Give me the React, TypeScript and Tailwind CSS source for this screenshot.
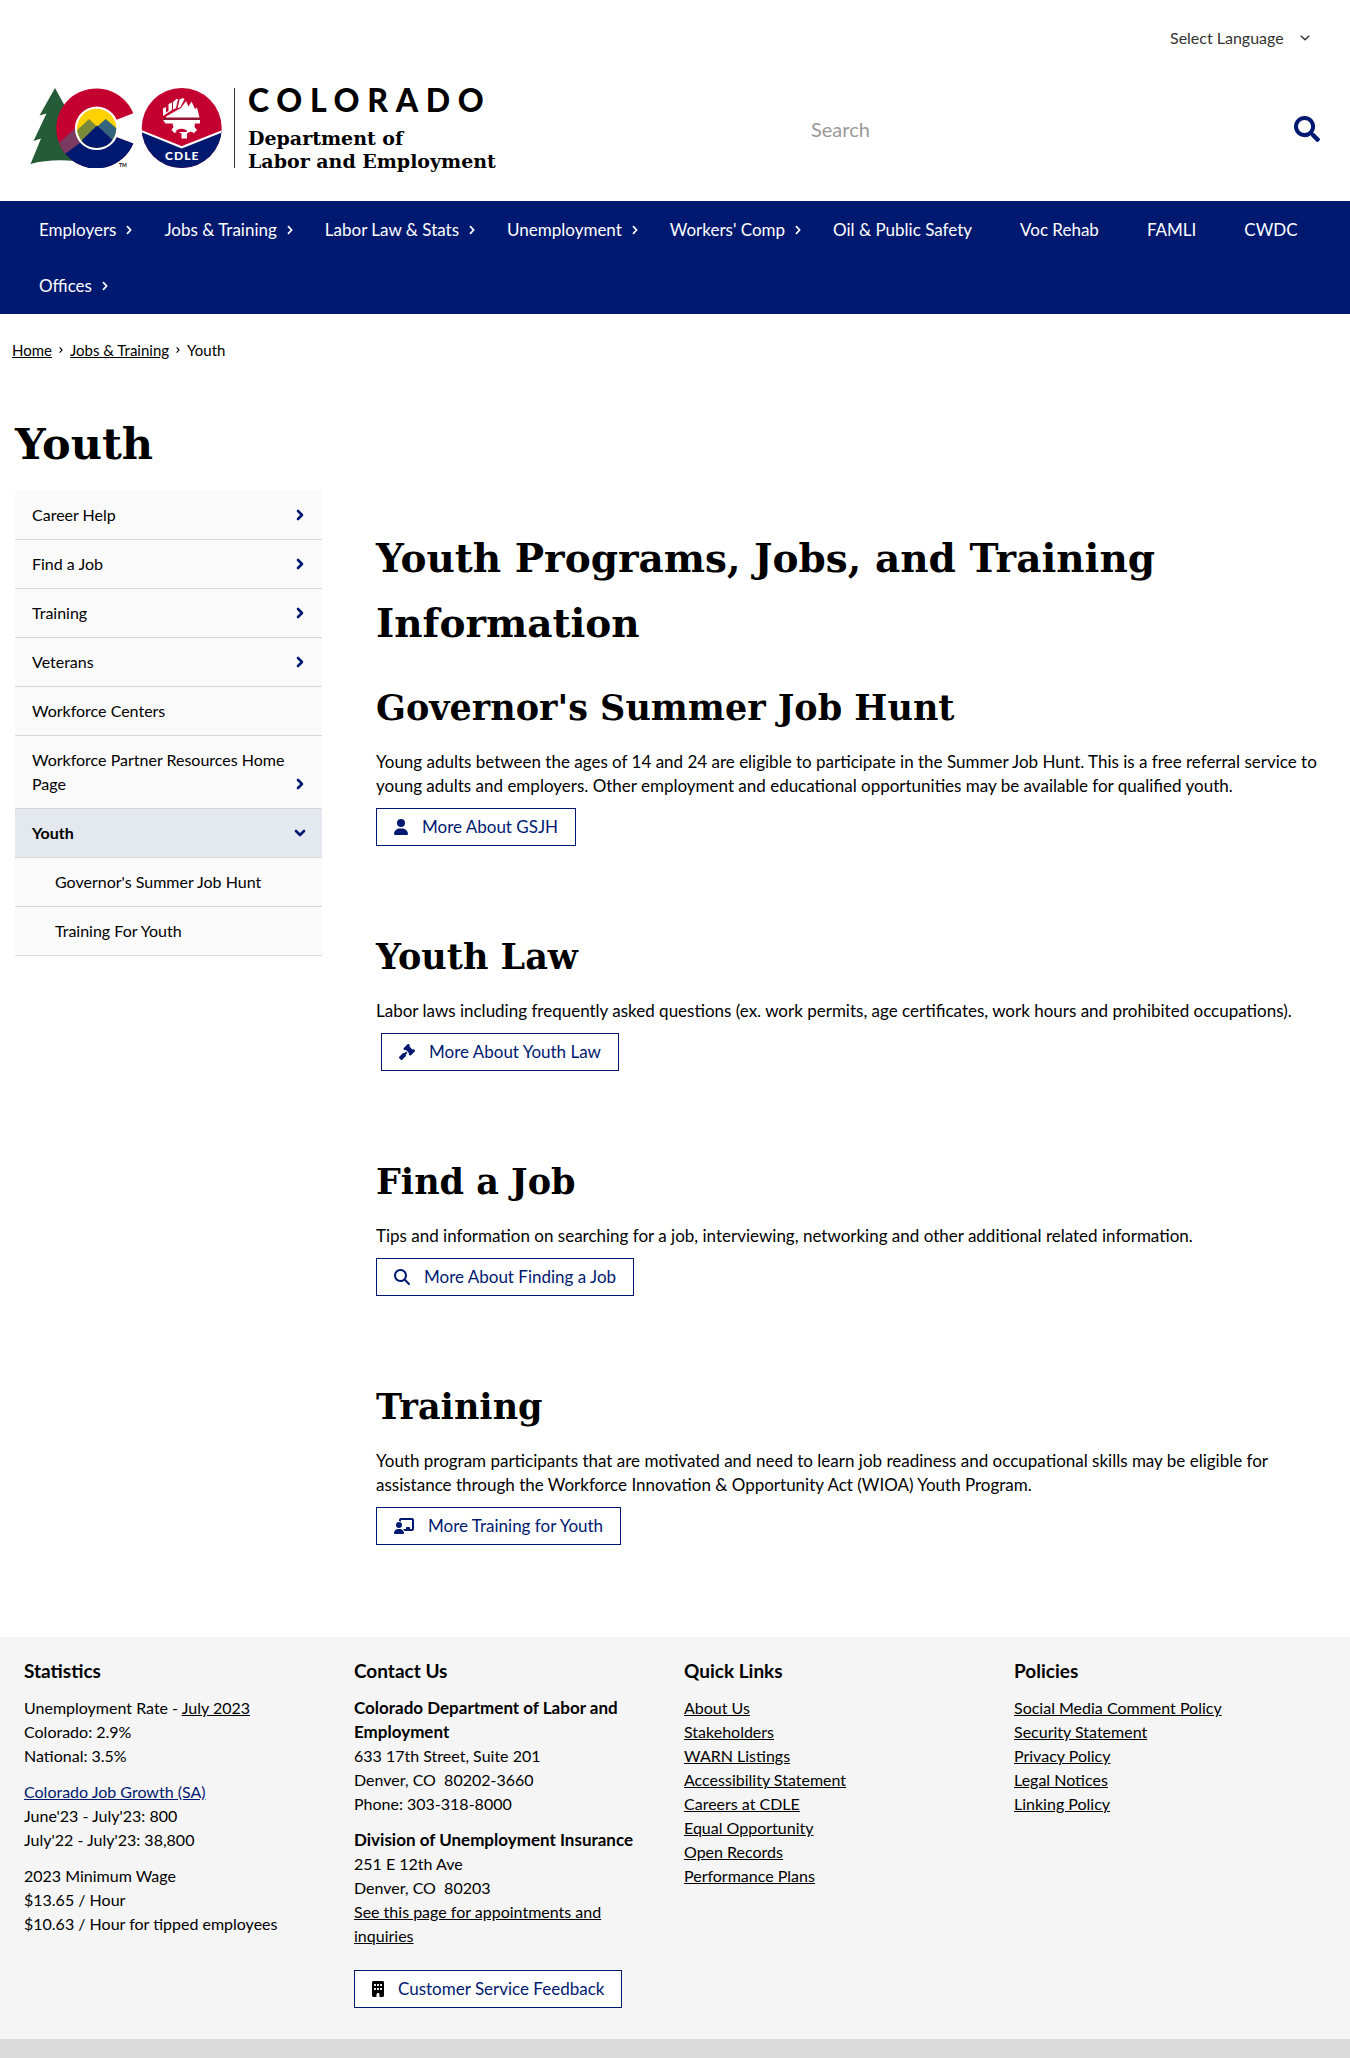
import React from "react";
import { FaBuilding, FaChalkboardUser, FaGavel, FaMagnifyingGlass, FaUser } from "react-icons/fa6";
import { FaSearch } from "react-icons/fa";

const slab = "font-['DejaVu_Serif',serif] font-bold";

function Emblems() {
  return (
    <svg viewBox="0 0 192 80" className="h-20 w-48 shrink-0" role="img" aria-label="Colorado and CDLE emblems">
      <defs>
        <clipPath id="disc">
          <circle cx="66.7" cy="40.3" r="19.6" />
        </clipPath>
        <clipPath id="letter">
          <path d="M103.3 25.3 A40 40 0 1 0 103.3 55.5 L86.5 49.3 L66.7 40 L86 32 Z" />
        </clipPath>
        <clipPath id="badge">
          <circle cx="151.7" cy="40" r="40" />
        </clipPath>
      </defs>
      <path
        d="M25 0 L36 20 L60 60 L45 73 C30 71.500 14 72 0.500 76 L11 50.500 L3.500 53 L16.500 25.500 L9.500 27.500 Z"
        fill="#255c38"
      />
      <g clipPath="url(#letter)">
        <rect x="20" y="0" width="90" height="80" fill="#c3002f" />
        <path d="M26 70 L48 48 L90 46 L120 56 L110 82 L20 82 Z" fill="#001970" />
        <path d="M24 59 L47 39 L54 52 L33.500 67 Z" fill="#7b3a62" />
      </g>
      <circle cx="66.700" cy="40.300" r="21.800" fill="#fff" />
      <g clipPath="url(#disc)">
        <rect x="46" y="20" width="42" height="42" fill="#ffd100" />
        <path d="M44 45 L59 31 L75 46 L60 62 L44 56 Z" fill="#7a8a3a" />
        <path d="M61 44 L75.700 31 L92 45 L88 58 L70 58 Z" fill="#35647e" />
        <path d="M46 58 L67 37.500 L88 57 L88 64 L46 64 Z" fill="#001970" />
      </g>
      <text x="89" y="79" fontSize="5" fontWeight="700" fontFamily="Lato, sans-serif">TM</text>

      <g clipPath="url(#badge)">
        <rect x="111" y="0" width="82" height="80" fill="#c3002f" />
        <path d="M111 43 L151.700 59.500 L192 43 V80 H111 Z" fill="#001970" />
        <path d="M111 43 L151.700 59.300 L193 43" fill="none" stroke="#fff" strokeWidth="2" />
      </g>
      <g fill="#fff">
        <path d="M133 20.500 l3 -1.500 v5.500 l2.500 -1.500 v-7 l3.500 -1.500 v7.500 l-9 6 z" />
        <path d="M143 14 l3.500 -3 h1.500 l-2 9 l-3 1.800 z M149.500 11.500 l3.500 -1.500 l1.500 1 l-4 8 l-3 1.500 z" />
        <path d="M136 28.500 L151 20 L156 13 L158.500 18.500 L161.500 13.500 L165 21 L167 19.500 L169.500 29.500 L136 29.500 Z" />
        <path d="M133 32 h37 v3.500 h-5 l-.5 3.500 l2.500 3 l-3 3 l-3.500 -1.500 l-3.500 2 v5 h-5.500 v-5 l-3.500 -2 l-3.500 1.500 l-3 -3 l2 -3 l-1 -3.500 h-7 z" />
      </g>
      <path d="M145.500 43.500 a7 5.500 0 0 1 12 0 l-2 .5 h-8 z" fill="#c3002f" />
      <path d="M133 31 H170" stroke="#57323c" strokeWidth="1.200" />
      <text x="152.200" y="72" textAnchor="middle" fill="#fff" fontSize="12" fontWeight="900" letterSpacing="1" fontFamily="Lato, sans-serif">
        CDLE
      </text>
    </svg>
  );
}

function Chevron({ className = "" }: { className?: string }) {
  return (
    <svg viewBox="0 0 6 10" className={className} aria-hidden="true">
      <path d="M1 1.200 L4.600 5 L1 8.800" fill="none" stroke="currentColor" strokeWidth="1.700" />
    </svg>
  );
}

function BoldChevron({ down = false }: { down?: boolean }) {
  return (
    <svg viewBox="0 0 12 12" className="my-1.5 h-3 w-3 shrink-0 text-[#001970]" aria-hidden="true">
      <path
        d={down ? "M2 4 L6 8 L10 4" : "M4 2 L8 6 L4 10"}
        fill="none"
        stroke="currentColor"
        strokeWidth="2.600"
        strokeLinecap="round"
        strokeLinejoin="round"
      />
    </svg>
  );
}

function Header() {
  return (
    <header className="px-[30px]">
      <div className="flex h-[76px] items-center justify-end pr-2.5">
        <div className="relative flex items-center text-[#333]">
          <select aria-label="Language" className="h-8 w-[140px] appearance-none bg-transparent leading-6">
            <option>Select Language</option>
          </select>
          <svg viewBox="0 0 10 6" className="pointer-events-none absolute right-0 h-1.5 w-2.5" aria-hidden="true">
            <path d="M.800 .800 L5 4.800 L9.200 .800" fill="none" stroke="currentColor" strokeWidth="1.500" />
          </svg>
        </div>
      </div>
      <div className="flex h-[125px] items-start justify-between">
        <a href="#" className="flex items-start pt-3 text-black">
          <Emblems />
          <span className="ml-3 h-20 w-px bg-[#333]" />
          <span className="ml-[13px] flex flex-col">
            <span className="text-[32px] leading-[23px] font-black tracking-[0.24em]">COLORADO</span>
            <span className={`${slab} mt-4 text-[19px] leading-[23px]`}>
              Department of
              <br />
              Labor and Employment
            </span>
          </span>
        </a>
        <form className="mt-[35px] flex w-[509px] items-center justify-between" onSubmit={(e) => e.preventDefault()}>
          <input
            type="search"
            aria-label="Search"
            placeholder="Search"
            className="h-9 min-w-0 flex-1 bg-transparent text-xl placeholder:text-[#999]"
          />
          <button type="submit" aria-label="Search" className="text-[#001970]">
            <FaSearch size={26} />
          </button>
        </form>
      </div>
    </header>
  );
}

const navItems = [
  { label: "Employers", menu: true },
  { label: "Jobs & Training", menu: true },
  { label: "Labor Law & Stats", menu: true },
  { label: "Unemployment", menu: true },
  { label: "Workers' Comp", menu: true },
  { label: "Oil & Public Safety", menu: false },
  { label: "Voc Rehab", menu: false },
  { label: "FAMLI", menu: false },
  { label: "CWDC", menu: false },
  { label: "Offices", menu: true },
];

function MainNav() {
  return (
    <nav aria-label="Main" className="bg-[#001970] px-[15px] pt-px text-[17px] text-white">
      <ul className="flex flex-wrap">
        {navItems.map((item) => (
          <li key={item.label}>
            <a href="#" className="relative flex h-14 items-center px-6">
              {item.label}
              {item.menu && <Chevron className="absolute right-2 h-2.5 w-1.5" />}
            </a>
          </li>
        ))}
      </ul>
    </nav>
  );
}

const sideItems = [
  { label: "Career Help", icon: "right" },
  { label: "Find a Job", icon: "right" },
  { label: "Training", icon: "right" },
  { label: "Veterans", icon: "right" },
  { label: "Workforce Centers", icon: "" },
  { label: "Workforce Partner Resources Home Page", icon: "right" },
  { label: "Youth", icon: "down" },
  { label: "Governor's Summer Job Hunt", icon: "sub" },
  { label: "Training For Youth", icon: "sub" },
];

function SideNav() {
  return (
    <nav aria-label="Section" className="w-[307px] shrink-0">
      <ul>
        {sideItems.map((item) => (
          <li
            key={item.label}
            className={`border-b border-[#d8d8d8] ${item.icon === "down" ? "bg-[#e4e8ef] font-bold" : "bg-[#fafafa]"}`}
          >
            <a
              href="#"
              className={`flex items-end justify-between py-3 pr-4 ${item.icon === "sub" ? "pl-10" : "pl-[17px]"}`}
            >
              <span>{item.label}</span>
              {item.icon === "right" && <BoldChevron />}
              {item.icon === "down" && <BoldChevron down />}
            </a>
          </li>
        ))}
      </ul>
    </nav>
  );
}

function OutlineButton({ icon, children, className = "" }: { icon: React.ReactNode; children: React.ReactNode; className?: string }) {
  return (
    <a
      href="#"
      className={`inline-flex h-[38px] items-center gap-3.5 border border-[#001970] bg-white px-[17px] text-[17px] text-[#001970] ${className}`}
    >
      {icon}
      {children}
    </a>
  );
}

const sections = [
  {
    title: "Governor's Summer Job Hunt",
    text: "Young adults between the ages of 14 and 24 are eligible to participate in the Summer Job Hunt. This is a free referral service to young adults and employers. Other employment and educational opportunities may be available for qualified youth.",
    button: "More About GSJH",
    icon: <FaUser className="h-4 w-3.5" />,
    indent: false,
  },
  {
    title: "Youth Law",
    text: "Labor laws including frequently asked questions (ex. work permits, age certificates, work hours and prohibited occupations).",
    button: "More About Youth Law",
    icon: <FaGavel size={16} />,
    indent: true,
  },
  {
    title: "Find a Job",
    text: "Tips and information on searching for a job, interviewing, networking and other additional related information.",
    button: "More About Finding a Job",
    icon: <FaMagnifyingGlass size={16} />,
    indent: false,
  },
  {
    title: "Training",
    text: "Youth program participants that are motivated and need to learn job readiness and occupational skills may be eligible for assistance through the Workforce Innovation & Opportunity Act (WIOA) Youth Program.",
    button: "More Training for Youth",
    icon: <FaChalkboardUser size={20} />,
    indent: false,
  },
];

function FooterColumn({ title, children }: { title: string; children: React.ReactNode }) {
  return (
    <section className="px-6">
      <h2 className="mb-3 text-[19px] leading-[27px] font-bold">{title}</h2>
      {children}
    </section>
  );
}

function LinkList({ items }: { items: string[] }) {
  return (
    <ul>
      {items.map((label) => (
        <li key={label}>
          <a href="#" className="underline">
            {label}
          </a>
        </li>
      ))}
    </ul>
  );
}

function Footer() {
  return (
    <footer>
      <div className="grid grid-cols-4 bg-[#f5f5f5] pt-5 pr-[30px] pb-[31px]">
        <FooterColumn title="Statistics">
          <p>
            Unemployment Rate - <a href="#" className="underline">July 2023</a>
            <br />
            Colorado: 2.9%
            <br />
            National: 3.5%
          </p>
          <p className="mt-3">
            <a href="#" className="text-[#001970] underline">Colorado Job Growth (SA)</a>
            <br />
            June'23 - July'23: 800
            <br />
            July'22 - July'23: 38,800
          </p>
          <p className="mt-3">
            2023 Minimum Wage
            <br />
            $13.65 / Hour
            <br />
            $10.63 / Hour for tipped employees
          </p>
        </FooterColumn>
        <FooterColumn title="Contact Us">
          <p>
            <strong className="text-[17px]">Colorado Department of Labor and Employment</strong>
            <br />
            633 17th Street, Suite 201
            <br />
            Denver, CO&nbsp; 80202-3660
            <br />
            Phone: 303-318-8000
          </p>
          <p className="mt-3">
            <strong className="text-[17px]">Division of Unemployment Insurance</strong>
            <br />
            251 E 12th Ave
            <br />
            Denver, CO&nbsp; 80203
            <br />
            <a href="#" className="underline">See this page for appointments and inquiries</a>
          </p>
          <OutlineButton className="mt-[22px] whitespace-nowrap" icon={<FaBuilding className="h-4 w-3 text-black" />}>
            Customer Service Feedback
          </OutlineButton>
        </FooterColumn>
        <FooterColumn title="Quick Links">
          <LinkList
            items={[
              "About Us",
              "Stakeholders",
              "WARN Listings",
              "Accessibility Statement",
              "Careers at CDLE",
              "Equal Opportunity",
              "Open Records",
              "Performance Plans",
            ]}
          />
        </FooterColumn>
        <FooterColumn title="Policies">
          <LinkList
            items={["Social Media Comment Policy", "Security Statement", "Privacy Policy", "Legal Notices", "Linking Policy"]}
          />
        </FooterColumn>
      </div>
      <div className="h-[19px] bg-[#dadada]" />
    </footer>
  );
}

export default function App() {
  return (
    <div className="bg-white font-[Lato,sans-serif] text-base leading-6 text-black">
      <Header />
      <MainNav />
      <main>
        <nav aria-label="Breadcrumb" className="px-3 pt-6 text-[15px] leading-6">
          <ol className="flex items-center">
            <li><a href="#" className="underline">Home</a></li>
            <li className="flex items-center"><Chevron className="mx-[7px] h-2 w-1" /><a href="#" className="underline">Jobs &amp; Training</a></li>
            <li className="flex items-center"><Chevron className="mx-[7px] h-2 w-1" />Youth</li>
          </ol>
        </nav>
        <h1 className={`${slab} mt-[50px] px-[15px] text-[43px] leading-[64px]`}>Youth</h1>
        <div className="flex items-start px-[15px] pt-[15px]">
          <SideNav />
          <div className="min-w-0 flex-1 pt-[35px] pr-1 pb-[92px] pl-[54px]">
            <h2 className={`${slab} mb-[22px] text-[39px] leading-[65px]`}>
              Youth Programs, Jobs, and Training Information
            </h2>
            <div className="flex flex-col gap-[81px]">
              {sections.map((s) => (
                <section key={s.title}>
                  <h3 className={`${slab} mb-3 text-[35px] leading-[60px]`}>{s.title}</h3>
                  <p className="mb-2.5 text-[17px]">{s.text}</p>
                  <div className="flex">
                    <OutlineButton icon={s.icon} className={s.indent ? "ml-[5px]" : ""}>
                      {s.button}
                    </OutlineButton>
                  </div>
                </section>
              ))}
            </div>
          </div>
        </div>
      </main>
      <Footer />
    </div>
  );
}
